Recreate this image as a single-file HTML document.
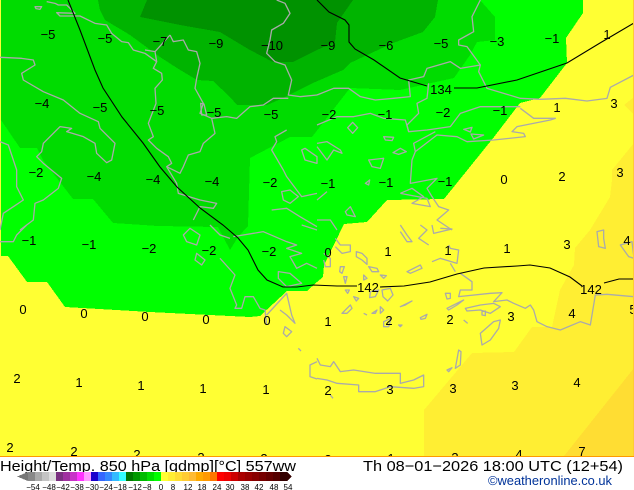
<!DOCTYPE html>
<html><head><meta charset="utf-8"><style>
html,body{margin:0;padding:0;background:#fff;width:634px;height:490px;overflow:hidden}
svg{display:block;font-family:"Liberation Sans",sans-serif}
.c path{fill:none;stroke:#aaa;stroke-width:3.9;stroke-linejoin:round}
.l text{font-size:13px;text-anchor:middle;fill:#000}
.s text{font-size:8px;text-anchor:middle;fill:#000}
</style></head><body>
<svg width="634" height="490" viewBox="0 0 634 490" xmlns="http://www.w3.org/2000/svg">
<defs><clipPath id="m"><rect x="0" y="0" width="634" height="456"/></clipPath></defs>
<g clip-path="url(#m)">
<rect width="634" height="456" fill="#ffff33"/>
<g shape-rendering="crispEdges">
<polygon fill="#ffee33" points="634,97 624,105 634,115"/>
<polygon fill="#ffee33" points="634,143 612,170 612,180 610,197 590,230 575,248 574,265 560,290 552,327 532,327 514,352 472,353 424,410 424,456 634,456"/>
<polygon fill="#ffdd33" points="634,368 564,456 634,456"/>
<polygon fill="#00ff00" points="1,0 1,256 8,256 27,282 47,282 65,307 150,312 250,317 260,316 287,291 307,291 317,282 323,277 324,265 344,224 367,222 387,200 444,199 494,137 520,103 540,98 567,63 566,38 583,13 583,0"/>
<polygon fill="#00dc00" points="1,0 1,120 20,148 37,148 43,160 73,199 93,199 113,223 158,226 218,227 230,250 238,237 248,226 250,158 290,137 312,137 350,88 400,90 454,78 470,55 477,42 495,40 495,17 480,0"/>
<polygon fill="#00b400" points="98,0 100,10 105,20 130,35 160,57 177,68 197,80 213,81 230,97 237,105 267,105 283,98 293,93 313,83 343,70 350,63 393,43 423,32 435,17 438,0"/>
<polygon fill="#009200" points="147,0 140,17 180,25 220,32 250,50 273,62 293,62 317,50 335,42 337,23 353,0"/>
</g>
</g>
<g clip-path="url(#m)" class="c">
<g transform="scale(.33333)">
<path d="M140,5L165,10L175,15L200,15L225,40L170,38L180,48L240,48L285,70L320,75L335,100L365,125L385,128L400,150L435,160L470,185L460,205L485,220L487,240L465,265L468,310L445,370L460,410L445,420L470,445L505,470L515,490L500,500L530,550L535,580L600,600L650,610L640,625L600,620L580,660"/>
<path d="M510,105L520,125L550,120L565,150L590,155L600,190L590,235L585,265L610,310L600,340L635,355L645,400L610,430L600,455L565,465L550,500L540,520L500,500"/>
<path d="M435,150L465,155L510,105M465,155L470,185"/>
<path d="M830,0L855,10L870,40L850,70L815,90L810,120L800,160L825,185L855,195L875,240L865,285L900,290L951,285"/>
<path d="M635,355L680,350L710,355L750,320L790,315L820,295L865,295"/>
<path d="M602,310L612,312L620,345L605,345Z"/>
<path d="M0,172L65,175L100,180L105,195L65,220L70,240L130,275L190,300L240,340L295,365L300,385L345,430L335,480L320,488L290,460L285,430L250,410L200,395L215,385L180,380L130,430L125,455L110,470L130,490L185,535L175,565L130,600L105,610L100,660L60,690"/>
<path d="M0,425L25,435L50,510L50,560L70,600L40,620L10,640L0,690"/>
<path d="M860,390L825,410L830,425L815,450L850,510L860,530L905,590L951,580"/>
<path d="M905,450L915,480L951,490L951,470L915,445Z"/>
<path d="M845,575L870,570L895,590L870,610L850,600Z"/>
<path d="M815,630L860,625L900,650L951,680"/>
<path d="M105,20L125,20L120,28L108,26Z"/>
</g>
<g transform="translate(317,0) scale(.33333)">
<path d="M0,285L50,265L95,265L130,290L175,300L230,295L280,290L275,240L320,230L330,205L400,185L430,205L490,195L485,215L510,265L610,295L670,298L745,295L810,303L870,295L880,262L951,225"/>
<path d="M490,0L465,50L470,95L425,120L425,135L450,140L490,195"/>
<path d="M335,250L330,295L300,310L305,340L270,375L275,395L330,390L400,380L430,340L490,320L610,320"/>
<path d="M0,375L60,350L110,350L160,340L200,355L265,360L275,395"/>
<path d="M355,395L290,430L295,455L285,480L280,550L360,535L330,565L345,590L365,620L395,630L360,660L405,690"/>
<path d="M295,455L360,405L420,410L450,425L530,420L625,410L620,400L585,395L600,380L700,360L715,355L650,355L610,325"/>
<path d="M92,383L107,367L122,383L107,400Z"/>
<path d="M200,410L230,412L225,422L205,420Z"/>
<path d="M228,458L250,445L268,455L245,463Z"/>
<path d="M155,480L200,475L190,505L165,500Z"/>
<path d="M440,388L465,382L460,396Z"/>
<path d="M462,402L500,405L470,417Z"/>
<path d="M0,430L30,425L70,450L75,460L50,450L30,480L0,440"/>
<path d="M250,580L285,565L320,590L285,610L340,620L330,595L250,580"/>
<path d="M85,635L100,620L115,650L90,645Z"/>
<path d="M0,660L40,660L60,690M0,600L30,575M145,550L158,540L155,555Z"/>
</g>
<g transform="translate(317,225) scale(.33333)">
<path d="M55,40L70,60L100,60L100,80L75,85L55,65"/>
<path d="M20,85L40,100L40,125L25,125L20,105"/>
<path d="M118,80L135,85L150,100L150,118L135,105L118,95Z"/>
<path d="M155,125L180,130L185,140L165,140ZM70,125L82,125L75,145L68,140ZM80,155L90,155L85,175ZM140,150L150,160L140,165ZM190,150L208,152L200,160Z"/>
<path d="M270,140L310,120L315,130L280,145Z"/>
<path d="M345,110L370,100L420,115L425,75L400,70L395,60M400,115L415,140"/>
<path d="M250,0L270,30L285,50L270,50L250,20M310,0L330,15L305,40L335,60M345,0L350,25L405,12L370,10"/>
<path d="M430,145L465,170L465,195L430,195L425,215L520,205L555,203L530,230L570,225L590,235L625,250L640,240L650,255L660,290L690,305L730,315L790,290L820,300L835,210L870,208L951,215"/>
<path d="M385,205L400,205L400,220L390,222ZM390,250L440,225L420,240L395,255ZM445,250L490,240L530,235L550,245L520,265L490,255L450,258ZM495,260L505,258L505,272L495,270ZM490,325L530,290L550,285L545,310L520,345L495,360Z"/>
<path d="M415,430L425,375L432,380L430,420ZM390,435L405,428L395,440Z"/>
<path d="M195,195L220,190L228,210L212,228L198,215ZM160,200L185,195L175,215L158,218ZM110,215L125,220L118,228ZM85,195L97,195L92,205ZM75,265L100,240L105,250L90,265ZM140,265L150,270M165,265L180,255L175,265ZM190,245L200,255L190,265ZM250,245L285,228L265,240ZM310,278L330,268L325,280L312,283ZM200,290L222,280L215,305L200,305ZM245,300L255,300L250,305ZM440,285L452,295"/>
<path d="M0,400L10,420L40,425L50,410L60,425L70,440L110,435L175,445L250,445L250,475L290,465L320,450L320,485L290,490L220,485L175,500L125,500L125,480L60,475L30,465L0,460"/>
<path d="M840,20L860,15L860,40L865,70L845,65ZM910,60L945,50L951,100L935,95ZM40,510L48,520"/>
</g>
<g transform="translate(0,225) scale(.33333)">
<path d="M0,50L40,50L50,30L80,0"/>
<path d="M570,10L600,30L590,60L560,50L550,30Z"/>
<path d="M590,85L615,105L605,120L585,105Z"/>
<path d="M630,0L660,30L690,40M660,100L705,150L690,190L710,240L705,250L725,250L735,215L760,215L780,250L795,255L800,300"/>
<path d="M800,270L860,205L875,270L885,295L860,270L840,255"/>
<path d="M855,305L875,320L860,335L850,325ZM895,370L903,378M951,410L930,420L930,455L951,462"/>
<path d="M700,35L790,20L860,50L890,60L860,70L905,85L870,95L890,130L920,115L951,130"/>
<path d="M835,140L870,145L905,175L860,185L835,160Z"/>
<path d="M905,0L951,15"/>
</g>
</g>
<g fill="none" stroke="#000" stroke-width="1.1">
<path d="M68,0L80,30L95,70L103,88L122,117L143,143L160,167L177,187L200,208L223,225L238,238L248,250L258,270L267,280L283,287L297,287L313,285L337,286L357,286"/>
<path d="M380,287L404,286L430,282L457,274L484,268L517,266L530,265L550,268L570,277L582,286"/>
<path d="M604,283L619,279L634,279"/>
<path d="M317,0L329,12L345,20L349,25L349,42L355,49L374,60L400,78L427,86"/>
<path d="M454,88L477,88L517,80L567,63L600,43L634,23"/>
</g>
<g clip-path="url(#m)" class="l">
<text x="48" y="39">−5</text><text x="105" y="43">−5</text><text x="160" y="46">−7</text><text x="216" y="48">−9</text><text x="272" y="50">−10</text><text x="328" y="50">−9</text><text x="386" y="50">−6</text><text x="441" y="48">−5</text><text x="497" y="46">−3</text><text x="552" y="43">−1</text><text x="607" y="39">1</text>
<text x="42" y="108">−4</text><text x="100" y="112">−5</text><text x="157" y="115">−5</text><text x="214" y="117">−5</text><text x="271" y="119">−5</text><text x="329" y="119">−2</text><text x="385" y="119">−1</text><text x="443" y="117">−2</text><text x="500" y="115">−1</text><text x="557" y="112">1</text><text x="614" y="108">3</text>
<text x="36" y="177">−2</text><text x="94" y="181">−4</text><text x="153" y="184">−4</text><text x="212" y="186">−4</text><text x="270" y="187">−2</text><text x="328" y="188">−1</text><text x="386" y="187">−1</text><text x="445" y="186">−1</text><text x="504" y="184">0</text><text x="562" y="181">2</text><text x="620" y="177">3</text>
<text x="29" y="245">−1</text><text x="89" y="249">−1</text><text x="149" y="253">−2</text><text x="209" y="255">−2</text><text x="269" y="256">−2</text><text x="328" y="257">0</text><text x="388" y="256">1</text><text x="448" y="255">1</text><text x="507" y="253">1</text><text x="567" y="249">3</text><text x="627" y="245">4</text>
<text x="23" y="314">0</text><text x="84" y="318">0</text><text x="145" y="321">0</text><text x="206" y="324">0</text><text x="267" y="325">0</text><text x="328" y="326">1</text><text x="389" y="325">2</text><text x="450" y="324">2</text><text x="511" y="321">3</text><text x="572" y="318">4</text><text x="633" y="314">5</text>
<text x="17" y="383">2</text><text x="79" y="387">1</text><text x="141" y="390">1</text><text x="203" y="393">1</text><text x="266" y="394">1</text><text x="328" y="395">2</text><text x="390" y="394">3</text><text x="453" y="393">3</text><text x="515" y="390">3</text><text x="577" y="387">4</text>
<text x="10" y="452">2</text><text x="74" y="456">2</text><text x="137" y="459">2</text><text x="201" y="462">2</text><text x="264" y="463">2</text><text x="328" y="464">2</text><text x="391" y="463">1</text><text x="455" y="462">3</text><text x="519" y="459">4</text><text x="582" y="456">7</text>
<text x="441" y="94">134</text><text x="368" y="292">142</text><text x="591" y="294">142</text>
</g>
<rect x="0" y="456" width="634" height="1" fill="#ff9900"/>
<rect x="633" y="0" width="1" height="456" fill="#ffcc33"/>
<text x="0" y="471" font-size="15" textLength="296" lengthAdjust="spacingAndGlyphs">Height/Temp. 850 hPa [gdmp][°C] 557ww</text>
<text x="363" y="471" font-size="15" textLength="260" lengthAdjust="spacingAndGlyphs">Th 08−01−2026 18:00 UTC (12+54)</text>
<text x="488" y="485" font-size="13" fill="#003399" textLength="124" lengthAdjust="spacingAndGlyphs">©weatheronline.co.uk</text>
<g shape-rendering="crispEdges">
<polygon points="28,472 28,481 17,476.500" fill="#777"/>
<polygon points="287,472 287,481 292,476.500" fill="#330000"/>
<rect x="28" y="472" width="7" height="9" fill="#888888"/><rect x="35" y="472" width="7" height="9" fill="#aaaaaa"/><rect x="42" y="472" width="7" height="9" fill="#c4c4c4"/><rect x="49" y="472" width="7" height="9" fill="#dddddd"/>
<rect x="56" y="472" width="7" height="9" fill="#7a3080"/><rect x="63" y="472" width="7" height="9" fill="#a030a0"/><rect x="70" y="472" width="7" height="9" fill="#c833c8"/><rect x="77" y="472" width="7" height="9" fill="#ff33ff"/><rect x="84" y="472" width="7" height="9" fill="#ff99ff"/>
<rect x="91" y="472" width="7" height="9" fill="#1a00cc"/><rect x="98" y="472" width="7" height="9" fill="#3366ff"/><rect x="105" y="472" width="7" height="9" fill="#3388ff"/><rect x="112" y="472" width="7" height="9" fill="#33bbff"/><rect x="119" y="472" width="7" height="9" fill="#33ffff"/>
<rect x="126" y="472" width="7" height="9" fill="#007700"/><rect x="133" y="472" width="7" height="9" fill="#009900"/><rect x="140" y="472" width="7" height="9" fill="#00bb00"/><rect x="147" y="472" width="7" height="9" fill="#00dd00"/><rect x="154" y="472" width="7" height="9" fill="#00ff00"/>
<rect x="161" y="472" width="7" height="9" fill="#ffff33"/><rect x="168" y="472" width="7" height="9" fill="#ffee33"/><rect x="175" y="472" width="7" height="9" fill="#ffdd33"/><rect x="182" y="472" width="7" height="9" fill="#ffcc33"/><rect x="189" y="472" width="7" height="9" fill="#ffbb33"/><rect x="196" y="472" width="7" height="9" fill="#ffaa00"/><rect x="203" y="472" width="7" height="9" fill="#ff9900"/><rect x="210" y="472" width="7" height="9" fill="#ff7700"/>
<rect x="217" y="472" width="7" height="9" fill="#ff0000"/><rect x="224" y="472" width="7" height="9" fill="#ee0000"/><rect x="231" y="472" width="7" height="9" fill="#cc0000"/><rect x="238" y="472" width="7" height="9" fill="#aa0000"/><rect x="245" y="472" width="7" height="9" fill="#990000"/><rect x="252" y="472" width="7" height="9" fill="#880000"/><rect x="259" y="472" width="7" height="9" fill="#770000"/><rect x="266" y="472" width="7" height="9" fill="#660000"/><rect x="273" y="472" width="7" height="9" fill="#550000"/><rect x="280" y="472" width="7" height="9" fill="#330000"/>
</g>
<g class="s">
<text x="33" y="490">−54</text><text x="49" y="490">−48</text><text x="63" y="490">−42</text><text x="77" y="490">−38</text><text x="92" y="490">−30</text><text x="106" y="490">−24</text><text x="120" y="490">−18</text><text x="135" y="490">−12</text><text x="147" y="490">−8</text><text x="161" y="490">0</text><text x="173" y="490">8</text><text x="188" y="490">12</text><text x="202" y="490">18</text><text x="217" y="490">24</text><text x="230" y="490">30</text><text x="245" y="490">38</text><text x="259" y="490">42</text><text x="274" y="490">48</text><text x="288" y="490">54</text>
</g>
</svg>
</body></html>
